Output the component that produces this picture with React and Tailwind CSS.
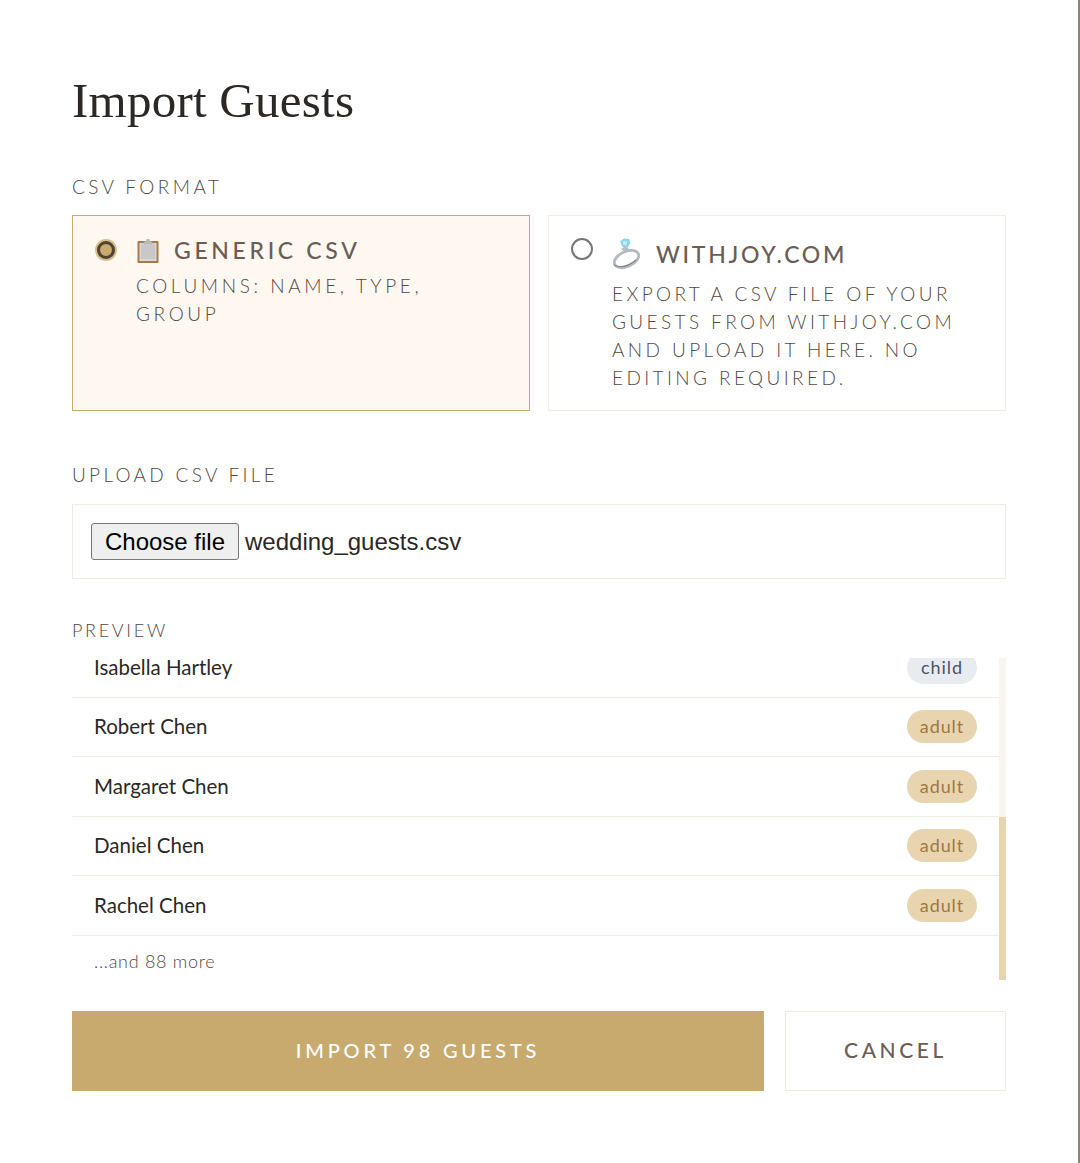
import React from 'react';

const guests = [
  { name: 'Robert Chen', type: 'adult' },
  { name: 'Margaret Chen', type: 'adult' },
  { name: 'Daniel Chen', type: 'adult' },
  { name: 'Rachel Chen', type: 'adult' },
];

const ClipboardEmoji = () => (
  <svg width="24" height="26" viewBox="0 0 24 26" className="shrink-0">
    <rect x="1.5" y="3" width="21" height="22" rx="1" fill="#a9794a" />
    <rect x="3.5" y="5" width="17" height="18" fill="#d9d9d9" />
    <rect x="5" y="6" width="14" height="15" fill="#c8c8c8" />
    <path d="M8 4 L10 3 L10.5 1 H13.5 L14 3 L16 4 V6 H8 Z" fill="#b8b8b8" />
  </svg>
);

const RingEmoji = () => (
  <svg width="30" height="32" viewBox="0 0 30 32" className="shrink-0">
    <path d="M9 11 L13 14 L17 11 L14 8 Z" fill="#b9bec2" />
    <ellipse cx="14.5" cy="21" rx="13" ry="7.5" transform="rotate(-25 14.5 21)" fill="none" stroke="#b4babf" strokeWidth="2.8" />
    <path d="M2 27 Q12 32 24 22" fill="none" stroke="#80878d" strokeWidth="1.3" />
    <path d="M8 3.5 L12 0.5 L17 1 L18.5 5 L15.5 9.5 L10.5 9 Z" fill="#8fd3ea" />
    <path d="M11 3 L15.5 3.5 L14.5 7 L11 6.5 Z" fill="#c7eef8" />
  </svg>
);

const Label = ({ children, className = '' }) => (
  <div className={`font-light leading-[24px] uppercase text-[#54483f] ${className}`}>{children}</div>
);

const Badge = ({ type }) => (
  <span className={`w-[70px] h-[33px] shrink-0 flex items-center justify-center rounded-full text-[18px] tracking-[0.9px] ${type === 'child' ? 'bg-[#e8ecf0] text-[#4a5568]' : 'bg-[#e8d5b0] text-[#a07840]'}`}>
    {type}
  </span>
);

const GuestRow = ({ name, type, className = '' }) => (
  <div className={`flex items-center justify-between h-[59.5px] px-[22px] border-b border-[#f0ebe0] ${className}`}>
    <span className="text-[20.5px] text-[#2c2825]">{name}</span>
    <Badge type={type} />
  </div>
);

export default function App() {
  return (
    <div className="w-[1080px] h-[1163px] bg-white overflow-hidden flex justify-between font-['Lato',sans-serif]">
      <div className="w-[1078px] pt-[72px] px-[72px]">
        <h1 className="font-['Liberation_Serif',serif] font-normal text-[49px] leading-[58px] tracking-[0.25px] text-[#2c2825]">Import Guests</h1>

        <Label className="mt-[45px] text-[19px] tracking-[3.4px]">CSV Format</Label>
        <div className="mt-[16px] grid grid-cols-2 gap-[18px]">
          <div className="h-[196px] border border-[#c8a96e] bg-[#fef8f1] flex gap-[19px] pl-[22px] pt-[23px]">
            <div className="w-[22px] h-[22px] shrink-0 rounded-full bg-[#c8a96e] border-[2px] border-[#d9bd8b] outline-[3px] outline-[#4f4433] -outline-offset-[5px]" />
            <div>
              <div className="flex items-center gap-[14px] h-[23px] text-[23px] font-medium tracking-[3.65px] uppercase text-[#6b5d54]">
                <ClipboardEmoji />
                <span>Generic CSV</span>
              </div>
              <p className="mt-[10px] w-[330px] font-light text-[19px] leading-[28px] tracking-[3.6px] uppercase text-[#54483f]">Columns: Name, Type, Group</p>
            </div>
          </div>
          <div className="h-[196px] border border-[#f0ebe0] bg-white flex gap-[19px] pl-[22px] pt-[22px]">
            <div className="w-[22px] h-[22px] shrink-0 rounded-full bg-white border-[2px] border-[#767676]" />
            <div>
              <div className="flex items-center gap-[14px] h-[32px] text-[23px] font-medium tracking-[2.7px] uppercase text-[#6b5d54]">
                <RingEmoji />
                <span>WithJoy.com</span>
              </div>
              <p className="mt-[10px] w-[370px] font-light text-[19px] leading-[28px] tracking-[3.4px] uppercase text-[#54483f]">Export a CSV file of your guests from WithJoy.com and upload it here. No editing required.</p>
            </div>
          </div>
        </div>

        <Label className="mt-[52px] text-[19px] tracking-[3.3px]">Upload CSV File</Label>
        <div className="mt-[17px] h-[75px] border border-[#f0ebe0] flex items-center gap-[6px] pl-[18px] font-['Liberation_Sans',sans-serif] text-[24px] text-[#2c2825]">
          <button className="w-[148px] h-[37px] rounded-[3px] bg-[#efefef] border border-[#767676] text-black text-[24px]">Choose file</button>
          <span>wedding_guests.csv</span>
        </div>

        <Label className="mt-[39px] text-[18px] tracking-[2.7px]">Preview</Label>
        <div className="mt-[16px] h-[322px] flex overflow-hidden">
          <div className="flex-1 overflow-hidden">
            <GuestRow name="Isabella Hartley" type="child" className="-mt-[20px]" />
            {guests.map((g) => <GuestRow key={g.name} {...g} />)}
            <div className="px-[22px] pt-[13px] text-[18px] font-light leading-[24px] tracking-[0.7px] text-[#54483f]">...and 88 more</div>
          </div>
          <div className="w-[7px] h-full bg-[#f8f4f0] flex flex-col justify-end">
            <div className="h-[163px] bg-[#e8d5b0]" />
          </div>
        </div>

        <div className="mt-[31px] flex gap-[21px]">
          <button className="w-[692px] h-[80px] pb-[2px] bg-[#c8a96e] text-white text-[20px] font-medium tracking-[3.8px] uppercase">Import 98 Guests</button>
          <button className="flex-1 h-[80px] pb-[2px] border border-[#f0ebe0] bg-white text-[#6b5d54] text-[21px] font-medium tracking-[3.6px] uppercase">Cancel</button>
        </div>
      </div>
      <div className="w-[2px] h-full bg-[#8a8378]" />
    </div>
  );
}
